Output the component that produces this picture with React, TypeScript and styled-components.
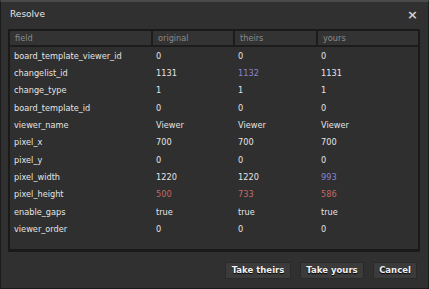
import React from "react";
import styled, { createGlobalStyle } from "styled-components";

const Global = createGlobalStyle`
  html, body {
    margin: 0;
    padding: 0;
    background: #2f2f2f;
  }
`;

const Dialog = styled.div`
  width: 429px;
  height: 289px;
  box-sizing: border-box;
  background: #303030;
  border: 1px solid #1c1c1c;
  border-top: 2px solid #4a4a4a;
  font-family: "DejaVu Sans", Verdana, sans-serif;
  color: #e2e2e2;
  display: flex;
  flex-direction: column;
`;

const TitleBar = styled.div`
  height: 24px;
  display: flex;
  align-items: center;
  justify-content: space-between;
  padding: 0 10px 0 9px;
  font-size: 9px;
  color: #e6e6e6;
`;

const Close = styled.span`
  font-size: 13px;
  font-weight: bold;
  color: #cfcfcf;
  line-height: 1;
`;

const TableBox = styled.div`
  margin: 3px 8px 0 7px;
  height: 223px;
  box-sizing: border-box;
  border: 2px solid #1a1a1a;
  border-bottom-width: 3px;
  background: #2f2f2f;
`;

const Table = styled.table`
  width: 100%;
  table-layout: fixed;
  border-collapse: collapse;
  font-size: 8.2px;
`;

const Col = styled.col<{ $w?: number }>`
  width: ${(p) => (p.$w ? `${p.$w}px` : "auto")};
`;

const Head = styled.th`
  height: 14px;
  padding: 0 0 0 5px;
  text-align: left;
  font-weight: normal;
  color: #8a8a8a;
  background: #333333;
  border-right: 2px solid #1c1c1c;
  border-bottom: 2px solid #1c1c1c;
  &:last-child {
    border-right: none;
  }
`;

const Cell = styled.td<{ $tone?: "blue" | "red" }>`
  height: 17.35px;
  padding: 0 0 0 4px;
  white-space: nowrap;
  color: ${(p) =>
    p.$tone === "blue" ? "#8a84cc" : p.$tone === "red" ? "#c46a66" : "#e4e4e4"};
`;

const Footer = styled.div`
  flex: 1;
  display: flex;
  justify-content: flex-end;
  align-items: center;
  gap: 9px;
  padding: 0 11px 0 0;
`;

const Button = styled.button<{ $w: number }>`
  width: ${(p) => p.$w}px;
  height: 17px;
  padding: 0;
  background: #3b3b3b;
  border: 1px solid #2a2a2a;
  color: #f0f0f0;
  font-family: "DejaVu Sans", Verdana, sans-serif;
  font-size: 8.5px;
  font-weight: bold;
  text-shadow: 0 1px 1px #000;
  cursor: pointer;
`;

type Tone = "blue" | "red" | undefined;
type Row = [string, [string, Tone], [string, Tone], [string, Tone]];

const rows: Row[] = [
  ["board_template_viewer_id", ["0", undefined], ["0", undefined], ["0", undefined]],
  ["changelist_id", ["1131", undefined], ["1132", "blue"], ["1131", undefined]],
  ["change_type", ["1", undefined], ["1", undefined], ["1", undefined]],
  ["board_template_id", ["0", undefined], ["0", undefined], ["0", undefined]],
  ["viewer_name", ["Viewer", undefined], ["Viewer", undefined], ["Viewer", undefined]],
  ["pixel_x", ["700", undefined], ["700", undefined], ["700", undefined]],
  ["pixel_y", ["0", undefined], ["0", undefined], ["0", undefined]],
  ["pixel_width", ["1220", undefined], ["1220", undefined], ["993", "blue"]],
  ["pixel_height", ["500", "red"], ["733", "red"], ["586", "red"]],
  ["enable_gaps", ["true", undefined], ["true", undefined], ["true", undefined]],
  ["viewer_order", ["0", undefined], ["0", undefined], ["0", undefined]],
];

export default function App() {
  return (
    <>
      <Global />
      <Dialog>
        <TitleBar>
          <span>Resolve</span>
          <Close>×</Close>
        </TitleBar>
        <TableBox>
          <Table>
            <colgroup>
              <Col $w={142} />
              <Col $w={82} />
              <Col $w={83} />
              <Col />
            </colgroup>
            <thead>
              <tr>
                <Head>field</Head>
                <Head>original</Head>
                <Head>theirs</Head>
                <Head>yours</Head>
              </tr>
            </thead>
            <tbody>
              {rows.map(([name, a, b, c]) => (
                <tr key={name}>
                  <Cell>{name}</Cell>
                  <Cell $tone={a[1]}>{a[0]}</Cell>
                  <Cell $tone={b[1]}>{b[0]}</Cell>
                  <Cell $tone={c[1]}>{c[0]}</Cell>
                </tr>
              ))}
            </tbody>
          </Table>
        </TableBox>
        <Footer>
          <Button $w={66}>Take theirs</Button>
          <Button $w={64}>Take yours</Button>
          <Button $w={44}>Cancel</Button>
        </Footer>
      </Dialog>
    </>
  );
}
